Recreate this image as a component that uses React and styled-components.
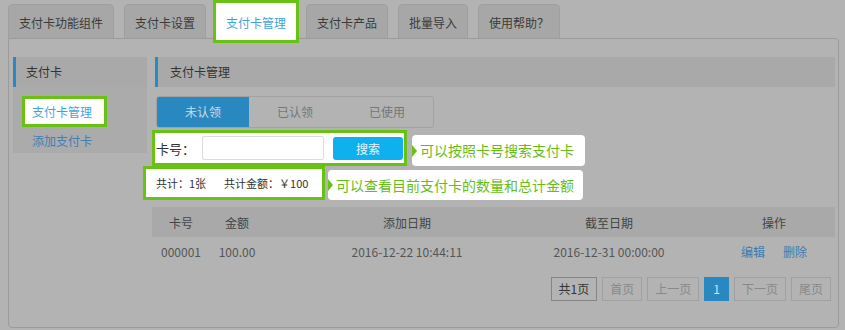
import React from 'react';
import styled, { createGlobalStyle } from 'styled-components';

const GlobalStyle = createGlobalStyle`
  body {
    margin: 0;
    background: #b3b3b3;
    font-family: "Noto Sans CJK SC", "Noto Sans", sans-serif;
    font-size: 12px;
    color: #333;
  }
`;

const Page = styled.div`
  width: 845px;
  height: 330px;
  overflow: hidden;
`;

const TabBar = styled.div`
  display: flex;
  align-items: flex-start;
  gap: 10px;
  height: 38px;
  padding-left: 8px;
`;

const Tab = styled.div`
  margin-top: 4px;
  height: 34px;
  line-height: 36px;
  padding: 0 10px;
  background: #a7a7a7;
  border: 1px solid #9f9f9f;
  border-bottom: none;
  border-radius: 5px 5px 0 0;
  box-sizing: border-box;
  color: #3a3a3a;
  font-size: 12px;
  white-space: nowrap;
`;

const ActiveTab = styled.div`
  position: relative;
  z-index: 2;
  margin: 0 -3px;
  height: 43px;
  line-height: 40px;
  padding: 0 10px;
  background: #fff;
  border: 3px solid #67c213;
  box-sizing: border-box;
  color: #3fa4dc;
  font-size: 12px;
  white-space: nowrap;
`;

const Panel = styled.div`
  display: flex;
  gap: 8px;
  margin-left: 8px;
  width: 831px;
  height: 290px;
  box-sizing: border-box;
  padding: 18px 5px 0 4px;
  border: 1px solid #9b9b9b;
  border-radius: 0 4px 4px 4px;
`;

const Sidebar = styled.div`
  width: 134px;
  flex-shrink: 0;
`;

const HeaderBar = styled.div`
  height: 30px;
  line-height: 30px;
  background: #a9a9a9;
  border-left: 3px solid #2a88c2;
  padding-left: ${p => p.$indent || 10}px;
  color: #333;
  font-size: 12px;
`;

const SideList = styled.div`
  background: #ababab;
  height: 66px;
  padding: 9px 0 0 9px;
  box-sizing: border-box;
`;

const SideItemActive = styled.div`
  width: 85px;
  height: 31px;
  box-sizing: border-box;
  border: 3px solid #67c213;
  background: #fff;
  padding-left: 7px;
  line-height: 25px;
  color: #3fa4dc;
  font-size: 12px;
`;

const SideItem = styled.div`
  padding-left: 10px;
  margin-top: 5px;
  color: #3d80b5;
  font-size: 12px;
`;

const Main = styled.div`
  flex: 1;
  display: flex;
  flex-direction: column;
`;

const Segment = styled.div`
  display: flex;
  width: 278px;
  height: 32px;
  margin: 9px 0 2px 1px;
  border: 1px solid #a2a2a2;
  border-radius: 3px;
  box-sizing: border-box;
  overflow: hidden;
`;

const SegItem = styled.div`
  flex: 1;
  text-align: center;
  line-height: 30px;
  font-size: 12px;
  background: ${p => (p.$active ? '#2a88c0' : 'transparent')};
  color: ${p => (p.$active ? '#c9dce8' : '#767676')};
`;

const AnnotRow = styled.div`
  display: flex;
  align-items: flex-start;
  margin-left: ${p => p.$shift}px;
`;

const Highlight = styled.div`
  display: flex;
  align-items: center;
  width: ${p => p.$w}px;
  height: ${p => p.$h}px;
  box-sizing: border-box;
  border: 3px solid #67c213;
  background: #fff;
  padding-left: ${p => p.$pad}px;
  font-size: 12px;
  color: #333;
`;

const Label = styled.span`
  width: 46px;
  font-size: 13px;
`;

const Input = styled.div`
  width: 122px;
  height: 24px;
  box-sizing: border-box;
  border: 1px solid #dcdcdc;
  border-radius: 2px;
`;

const SearchButton = styled.div`
  margin-left: 9px;
  width: 70px;
  height: 23px;
  line-height: 23px;
  text-align: center;
  background: #0fb0ee;
  border-radius: 3px;
  color: #e8f6fc;
  font-size: 12px;
`;

const Stat = styled.span`
  margin-right: ${p => p.$gap || 0}px;
  font-size: 11px;
  white-space: nowrap;
`;

const Callout = styled.div`
  position: relative;
  margin: ${p => p.$top}px 0 0 ${p => p.$left}px;
  width: ${p => p.$w}px;
  height: ${p => p.$h}px;
  line-height: ${p => p.$h}px;
  box-sizing: border-box;
  padding-left: 8px;
  background: #fff;
  border-radius: 4px;
  color: #66bd1a;
  font-size: 14px;
  white-space: nowrap;

  &::before {
    content: '';
    position: absolute;
    left: 0;
    top: 50%;
    margin-top: -6px;
    border-top: 6px solid transparent;
    border-bottom: 6px solid transparent;
    border-left: 5px solid #67c213;
  }
`;

const Table = styled.div`
  margin: 7px 0 0 -3px;
`;

const TRow = styled.div`
  display: grid;
  grid-template-columns: 58px 54px 286px 118px 167px;
  height: ${p => (p.$head ? 30 : 28)}px;
  align-items: center;
  background: ${p => (p.$head ? '#a9a9a9' : 'transparent')};
  color: ${p => (p.$head ? '#444' : '#555')};
  font-size: 12px;
`;

const Cell = styled.div`
  text-align: center;
  padding-left: ${p => p.$pad || 0}px;
  white-space: nowrap;
`;

const Link = styled.span`
  color: #3a7cb0;
  margin: 0 9px;
`;

const Pager = styled.div`
  display: flex;
  justify-content: flex-end;
  gap: 5px;
  margin: 12px 4px 0 0;
`;

const PageBtn = styled.div`
  height: 24px;
  line-height: 22px;
  padding: 0 ${p => (p.$active ? 8 : 7)}px;
  box-sizing: border-box;
  border: 1px solid;
  background: ${p => (p.$active ? '#2a88c0' : 'transparent')};
  border-color: ${p => (p.$active ? '#2a88c0' : p.$strong ? '#858585' : '#a0a0a0')};
  color: ${p => (p.$active ? '#d2e2ec' : p.$strong ? '#333' : '#888')};
  font-size: 12px;
`;

const tabs = ['支付卡功能组件', '支付卡设置', '支付卡管理', '支付卡产品', '批量导入', '使用帮助？'];

const App = () => {
  return (
    <Page>
      <GlobalStyle />
      <TabBar>
        {tabs.map((t, i) =>
          i === 2 ? <ActiveTab key={t}>{t}</ActiveTab> : <Tab key={t}>{t}</Tab>
        )}
      </TabBar>
      <Panel>
        <Sidebar>
          <HeaderBar>支付卡</HeaderBar>
          <SideList>
            <SideItemActive>支付卡管理</SideItemActive>
            <SideItem>添加支付卡</SideItem>
          </SideList>
        </Sidebar>
        <Main>
          <HeaderBar $indent={12}>支付卡管理</HeaderBar>
          <Segment>
            <SegItem $active>未认领</SegItem>
            <SegItem>已认领</SegItem>
            <SegItem>已使用</SegItem>
          </Segment>
          <AnnotRow $shift={-3}>
            <Highlight $w={255} $h={36} $pad={1}>
              <Label>卡号：</Label>
              <Input />
              <SearchButton>搜索</SearchButton>
            </Highlight>
            <Callout $top={5} $left={5} $w={173} $h={31}>可以按照卡号搜索支付卡</Callout>
          </AnnotRow>
          <AnnotRow $shift={-12}>
            <Highlight $w={182} $h={34} $pad={10}>
              <Stat $gap={18}>共计：1张</Stat>
              <Stat>共计金额：￥100</Stat>
            </Highlight>
            <Callout $top={4} $left={3} $w={255} $h={30}>可以查看目前支付卡的数量和总计金额</Callout>
          </AnnotRow>
          <Table>
            <TRow $head>
              <Cell>卡号</Cell>
              <Cell>金额</Cell>
              <Cell>添加日期</Cell>
              <Cell>截至日期</Cell>
              <Cell $pad={45}>操作</Cell>
            </TRow>
            <TRow>
              <Cell>000001</Cell>
              <Cell>100.00</Cell>
              <Cell>2016-12-22 10:44:11</Cell>
              <Cell>2016-12-31 00:00:00</Cell>
              <Cell $pad={45}>
                <Link>编辑</Link>
                <Link>删除</Link>
              </Cell>
            </TRow>
          </Table>
          <Pager>
            <PageBtn $strong>共1页</PageBtn>
            <PageBtn>首页</PageBtn>
            <PageBtn>上一页</PageBtn>
            <PageBtn $active>1</PageBtn>
            <PageBtn>下一页</PageBtn>
            <PageBtn>尾页</PageBtn>
          </Pager>
        </Main>
      </Panel>
    </Page>
  );
};

export default App;
